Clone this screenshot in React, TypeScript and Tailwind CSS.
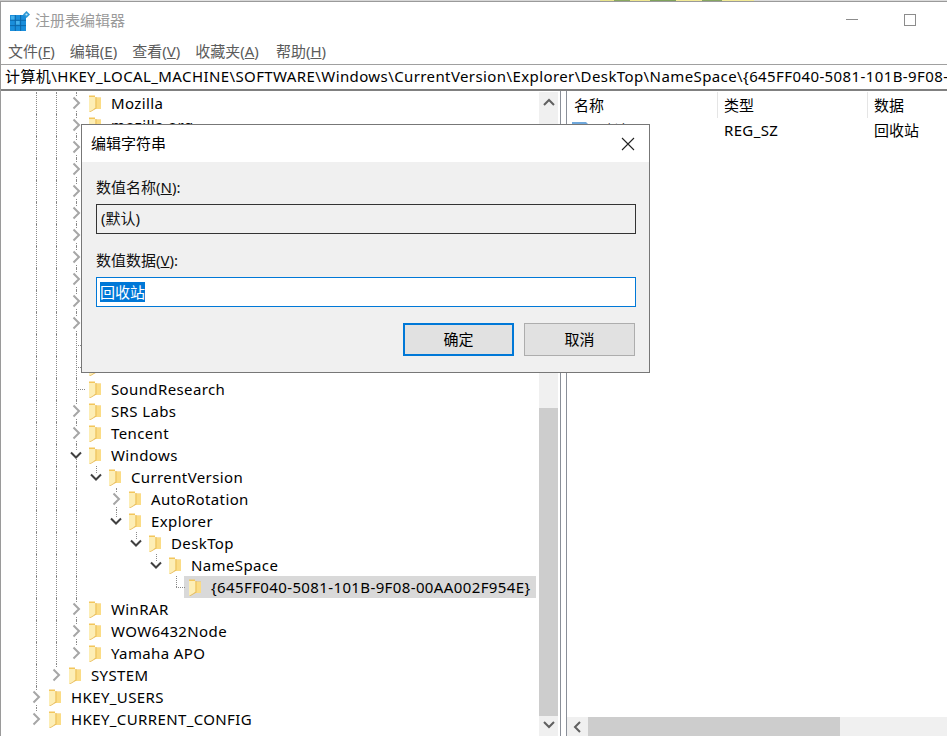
import React from 'react';

type Row = {
  d: number;
  name: string;
  chev?: 'open' | 'closed';
  guides: number[];
  last?: boolean;
  sel?: boolean;
};

const g2 = [0, 1];
const g3 = [0, 1, 2];

const rows: Row[] = [
  { d: 2, name: 'Mozilla', chev: 'closed', guides: g2 },
  { d: 2, name: 'mozilla.org', chev: 'closed', guides: g2 },
  { d: 2, name: 'MozillaPlugins', chev: 'closed', guides: g2 },
  { d: 2, name: 'Nuance', chev: 'closed', guides: g2 },
  { d: 2, name: 'ODBC', chev: 'closed', guides: g2 },
  { d: 2, name: 'OEM', chev: 'closed', guides: g2 },
  { d: 2, name: 'Partner', chev: 'closed', guides: g2 },
  { d: 2, name: 'Policies', chev: 'closed', guides: g2 },
  { d: 2, name: 'Realtek', chev: 'closed', guides: g2 },
  { d: 2, name: 'RegisteredApplications', chev: 'closed', guides: g2 },
  { d: 2, name: 'Roblox', chev: 'closed', guides: g2 },
  { d: 2, name: 'Sonic', guides: g2 },
  { d: 2, name: 'SonicFocus', guides: g2 },
  { d: 2, name: 'SoundResearch', guides: g2 },
  { d: 2, name: 'SRS Labs', chev: 'closed', guides: g2 },
  { d: 2, name: 'Tencent', chev: 'closed', guides: g2 },
  { d: 2, name: 'Windows', chev: 'open', guides: g2 },
  { d: 3, name: 'CurrentVersion', chev: 'open', guides: g3, last: true },
  { d: 4, name: 'AutoRotation', chev: 'closed', guides: g3 },
  { d: 4, name: 'Explorer', chev: 'open', guides: g3, last: true },
  { d: 5, name: 'DeskTop', chev: 'open', guides: g3, last: true },
  { d: 6, name: 'NameSpace', chev: 'open', guides: g3, last: true },
  { d: 7, name: '{645FF040-5081-101B-9F08-00AA002F954E}', guides: g3, last: true, sel: true },
  { d: 2, name: 'WinRAR', chev: 'closed', guides: g2 },
  { d: 2, name: 'WOW6432Node', chev: 'closed', guides: g2 },
  { d: 2, name: 'Yamaha APO', chev: 'closed', guides: g2, last: true },
  { d: 1, name: 'SYSTEM', chev: 'closed', guides: [0], last: true },
  { d: 0, name: 'HKEY_USERS', chev: 'closed', guides: [] },
  { d: 0, name: 'HKEY_CURRENT_CONFIG', chev: 'closed', guides: [], last: true },
];

const strip = [
  ['w-[120px]', 'bg-[#c8c8c8]'],
  ['w-[120px]', 'bg-[#e4e4e4]'],
  ['w-[360px]', 'bg-[#d8d8d8]'],
  ['w-[14px]', 'bg-[#e8e48c]'],
  ['w-[16px]', 'bg-[#8aa860]'],
  ['w-[20px]', 'bg-[#f0e890]'],
  ['w-[26px]', 'bg-[#7fa25c]'],
  ['w-[26px]', 'bg-[#f2ea96]'],
  ['w-[20px]', 'bg-[#86a662]'],
  ['w-[32px]', 'bg-[#f2ea96]'],
  ['flex-1', 'bg-[#dcdcdc]'],
];

function Folder() {
  return (
    <svg width="12" height="17" viewBox="0 0 12 17" className="shrink-0">
      <path d="M0 0.500h6v2h6v11.500H0z" fill="#f3c65c" />
      <path d="M6 3h6v11H6z" fill="#fbdc85" />
      <path d="M0 2h6.500v11L0 17z" fill="#fdeeb6" />
      <path d="M6.500 2v11L0 17h1.500l6-3.500V2z" fill="#e9bd58" />
    </svg>
  );
}

function Chevron({ kind }: { kind: 'open' | 'closed' }) {
  if (kind === 'open') {
    return (
      <svg width="12" height="8" viewBox="0 0 12 8" className="bg-white">
        <path d="M1 1.500l5 5 5-5" fill="none" stroke="#404040" strokeWidth="2" />
      </svg>
    );
  }
  return (
    <svg width="9" height="14" viewBox="0 0 9 14" className="bg-white">
      <path d="M1.500 1.500l5.500 5.500-5.500 5.500" fill="none" stroke="#a6a6a6" strokeWidth="2" />
    </svg>
  );
}

function TreeRow({ row }: { row: Row }) {
  const cols = Array.from({ length: row.d }, (_, i) => i);
  return (
    <div className="flex h-[22px] items-center pl-[25px] whitespace-nowrap">
      {cols.map((c) => (
        <div key={c} className="relative h-full w-5 shrink-0">
          {row.guides.includes(c) && (
            <div className="absolute left-[10px] top-0 bottom-0 border-l border-dotted border-[#8a8a8a]" />
          )}
        </div>
      ))}
      <div className="relative flex h-full w-5 shrink-0 items-center justify-center">
        <div
          className={
            row.last
              ? 'absolute left-[10px] top-0 h-[11px] border-l border-dotted border-[#8a8a8a]'
              : 'absolute left-[10px] top-0 bottom-0 border-l border-dotted border-[#8a8a8a]'
          }
        />
        {row.chev ? (
          <div className="relative z-10 flex">
            <Chevron kind={row.chev} />
          </div>
        ) : (
          <div className="absolute left-[10px] top-[11px] w-[9px] border-t border-dotted border-[#8a8a8a]" />
        )}
      </div>
      <div
        className={
          row.sel
            ? 'ml-[-2px] flex h-full w-[352px] shrink-0 items-center bg-[#d9d9d9] pl-[5px]'
            : 'ml-[-2px] flex h-full items-center pl-[5px]'
        }
      >
        <div className="w-[22px] shrink-0">
          <Folder />
        </div>
        <span className="text-[15px] tracking-[0.38px] text-black">{row.name}</span>
      </div>
    </div>
  );
}

function ScrollArrow({ dir }: { dir: 'up' | 'down' | 'left' }) {
  const d = dir === 'up' ? 'M1 7l5-5 5 5' : dir === 'down' ? 'M1 2l5 5 5-5' : 'M8 1L3 6l5 5';
  return (
    <svg width="12" height="12" viewBox="0 0 12 12">
      <path d={d} fill="none" stroke="#606060" strokeWidth="2" />
    </svg>
  );
}

function Dialog() {
  return (
    <div className="absolute left-[81px] top-[124px] z-20 flex h-[249px] w-[569px] flex-col border border-[#777777] bg-[#f0f0f0]">
      <div className="flex h-[37px] shrink-0 items-center justify-between bg-white pl-[9px] pr-[14px]">
        <span className="text-[15px] text-black">编辑字符串</span>
        <svg width="14" height="14" viewBox="0 0 14 14">
          <path d="M1 1l12 12M13 1L1 13" stroke="#222222" strokeWidth="1.100" />
        </svg>
      </div>
      <div className="flex flex-1 flex-col px-[14px] pt-[15px]">
        <div className="h-[22px] text-[15px] leading-[21px] text-[#111111]">
          数值名称(<span className="underline">N</span>):
        </div>
        <div className="mt-[5px] flex h-[30px] w-[540px] items-center border border-[#333333] px-[4px] pb-px text-[15px] text-[#111111]">
          (默认)
        </div>
        <div className="mt-[15px] h-[22px] text-[15px] leading-[22px] text-[#111111]">
          数值数据(<span className="underline">V</span>):
        </div>
        <div className="mt-[6px] flex h-[30px] w-[540px] items-center border border-[#0078d7] bg-white px-[3px] pb-px text-[15px]">
          <span className="bg-[#0078d7] leading-[20px] text-white">回收站</span>
        </div>
        <div className="mt-[16px] flex w-[539px] justify-end gap-[10px]">
          <button className="h-[33px] w-[111px] border-2 border-[#0078d7] bg-[#e1e1e1] text-[15px] text-black">确定</button>
          <button className="h-[33px] w-[111px] border border-[#adadad] bg-[#e1e1e1] text-[15px] text-black">取消</button>
        </div>
      </div>
    </div>
  );
}

export default function App() {
  return (
    <div
      className="relative flex h-[736px] w-[947px] flex-col overflow-hidden bg-white"
      style={{ fontFamily: '"Noto Sans", "Noto Sans CJK SC", sans-serif' }}
    >
      {/* wallpaper sliver above the window */}
      <div className="flex h-px shrink-0">
        {strip.map(([w, c], i) => (
          <div key={i} className={`${w} ${c}`} />
        ))}
      </div>

      <div className="flex min-h-0 flex-1 flex-col border-l border-t border-[#9a9a9a]">
        {/* title bar */}
        <div className="flex h-[36px] shrink-0 items-center pl-[9px]">
          <svg width="21" height="20" viewBox="0 0 21 20" className="mr-[4px] mt-[1px]">
            <rect x="0" y="4" width="16" height="16" fill="#1a8edb" />
            <path d="M5.300 4v16M10.600 4v16M0 9.300h16M0 14.600h16" stroke="#0b64a6" strokeWidth="0.900" />
            <rect x="1" y="5" width="3.500" height="3.500" fill="#45b0ea" />
            <rect x="6" y="10" width="3.500" height="3.500" fill="#45b0ea" />
            <path d="M16.500 0l3.500 3.500-3.500 3.500-3.500-3.500z" fill="#2f9ad6" />
            <circle cx="16.500" cy="3.500" r="1.100" fill="#bfe3f7" />
          </svg>
          <span className="text-[15px] text-[#9a9a9a]">注册表编辑器</span>
          <div className="ml-auto mr-[46px] mb-[2px] h-px w-[12px] bg-[#8c8c8c]" />
          <div className="mr-[31px] h-[12px] w-[12px] border border-[#8c8c8c]" />
        </div>

        {/* menu bar */}
        <div className="flex h-[26px] shrink-0 items-center gap-[15px] pl-[7px] text-[15px] text-[#5c5c5c]">
          <span>文件(<span className="underline">F</span>)</span>
          <span>编辑(<span className="underline">E</span>)</span>
          <span>查看(<span className="underline">V</span>)</span>
          <span>收藏夹(<span className="underline">A</span>)</span>
          <span className="ml-[2px]">帮助(<span className="underline">H</span>)</span>
        </div>

        {/* address bar */}
        <div className="flex h-[27px] shrink-0 items-center overflow-hidden whitespace-nowrap border-b-2 border-t border-b-[#808080] border-t-[#a0a0a0] pb-px pl-[4px] text-[15px] tracking-[0.4px] text-black">
          计算机\HKEY_LOCAL_MACHINE\SOFTWARE\Windows\CurrentVersion\Explorer\DeskTop\NameSpace\{'{'}645FF040-5081-101B-9F08-00AA002F954E{'}'}
        </div>

        <div className="flex min-h-0 flex-1">
          {/* tree pane */}
          <div className="w-[538px] shrink-0 overflow-hidden pt-[1px]">
            {rows.map((r) => (
              <TreeRow key={r.name} row={r} />
            ))}
          </div>

          {/* tree scrollbar */}
          <div className="mt-px flex w-[19px] shrink-0 flex-col bg-[#f0f0f0]">
            <div className="flex h-[23px] items-center justify-center">
              <ScrollArrow dir="up" />
            </div>
            <div className="flex-1" />
            <div className="h-[308px] bg-[#cdcdcd]" />
            <div className="flex h-[20px] items-center justify-center">
              <ScrollArrow dir="down" />
            </div>
          </div>

          {/* splitter */}
          <div className="ml-[2px] w-[7px] shrink-0 border-x border-[#8a8f98] bg-white" />

          {/* list pane */}
          <div className="flex min-w-0 flex-1 flex-col pt-px">
            <div className="flex h-[26px] shrink-0 items-center text-[15px] text-black">
              <div className="flex h-full w-[151px] items-center border-r border-[#e5e5e5] pl-[7px]">名称</div>
              <div className="flex h-full w-[150px] items-center border-r border-[#e5e5e5] pl-[6px]">类型</div>
              <div className="pl-[6px]">数据</div>
            </div>
            <div className="flex h-[24px] shrink-0 items-center text-[15px] text-black">
              <div className="flex w-[151px] items-center gap-[4px] pl-[5px]">
                <svg width="18" height="16" viewBox="0 0 18 16">
                  <path d="M0 0h14l4 4v12H0z" fill="#6fa8dc" />
                </svg>
                (默认)
              </div>
              <div className="w-[150px] pl-[6px] tracking-[0.35px]">REG_SZ</div>
              <div className="pl-[6px]">回收站</div>
            </div>
            <div className="flex-1" />
            {/* list scrollbar */}
            <div className="flex h-[19px] shrink-0 bg-[#f0f0f0]">
              <div className="flex w-[21px] items-center justify-center">
                <ScrollArrow dir="left" />
              </div>
              <div className="w-[252px] bg-[#cdcdcd]" />
            </div>
          </div>
        </div>
      </div>

      <Dialog />
    </div>
  );
}
